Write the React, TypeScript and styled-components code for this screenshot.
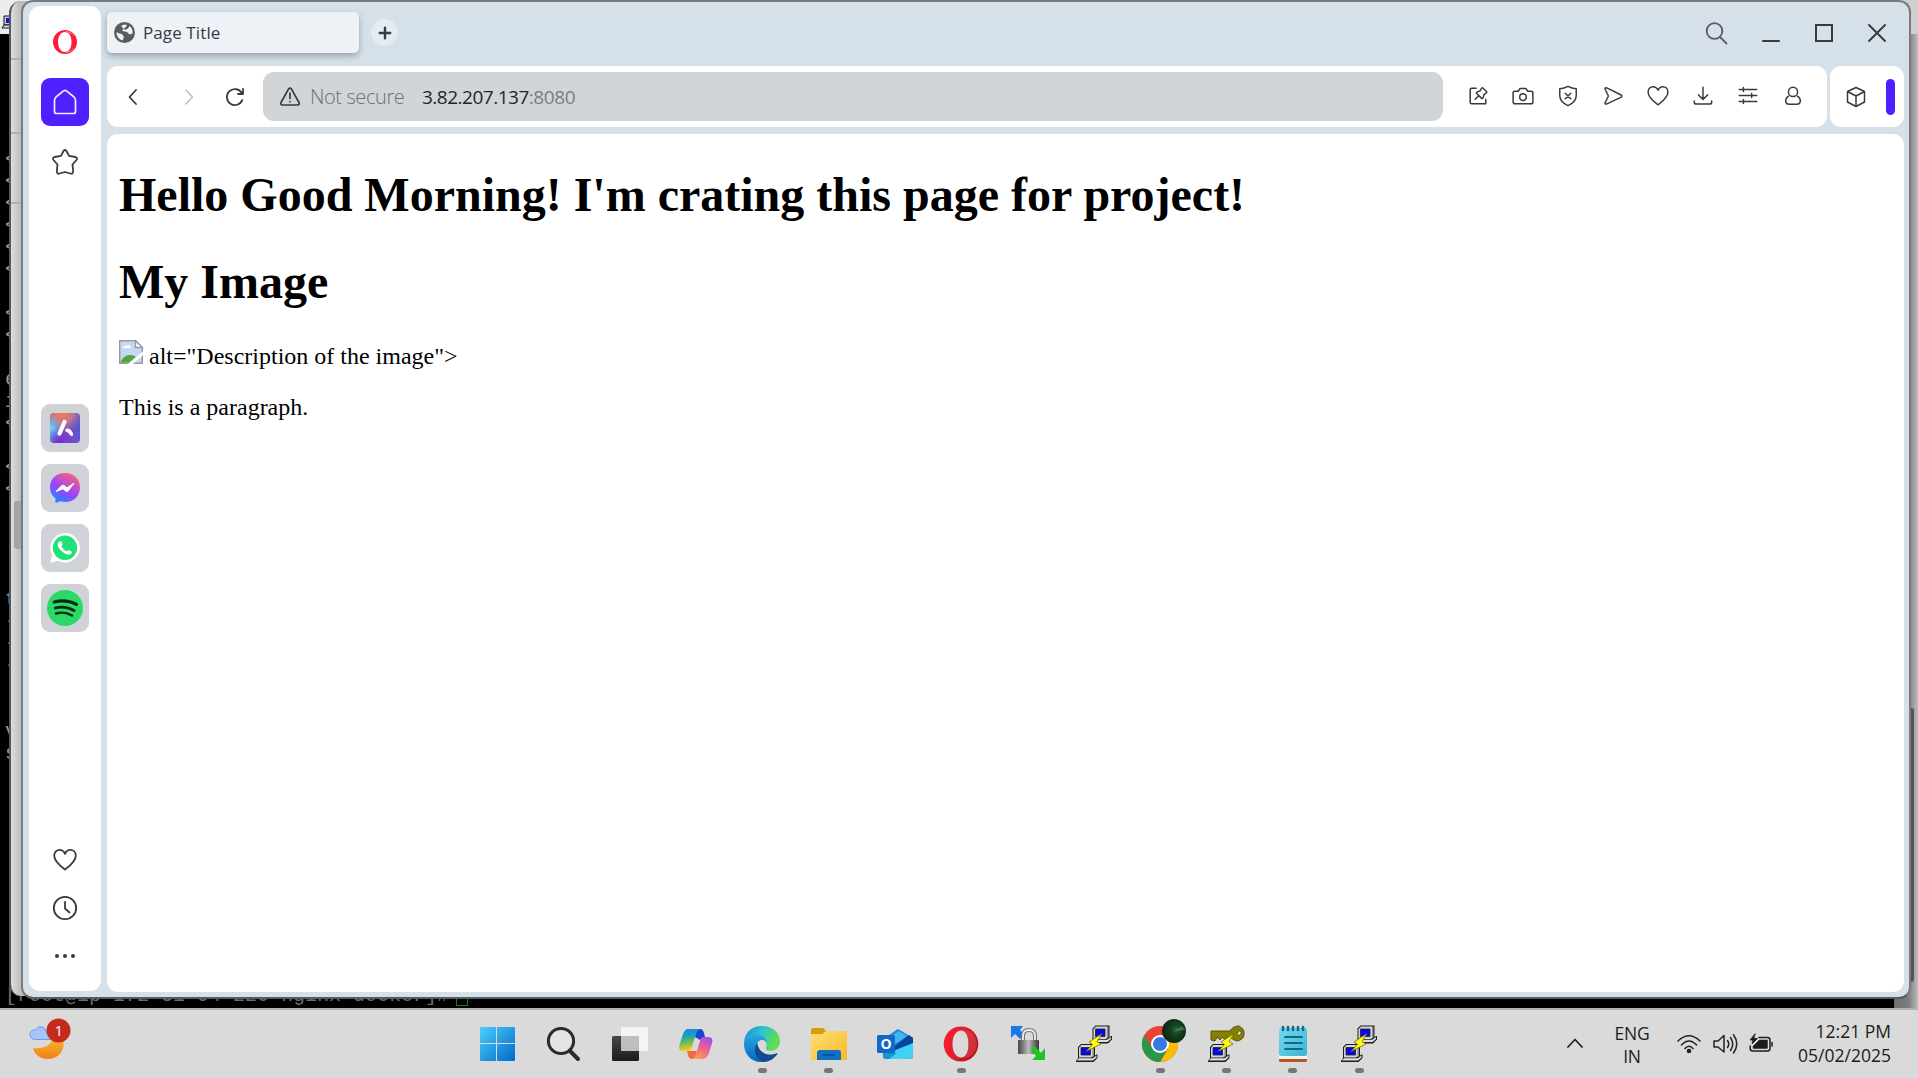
import React from "react";
import styled, { createGlobalStyle } from "styled-components";

const INK = "#343b42";
const FRAME = "#d6e0e9";
const UI = '"Open Sans", "Noto Sans", sans-serif';

const GlobalStyle = createGlobalStyle`
  * { box-sizing: border-box; }
  body { margin: 0; overflow: hidden; background: #000; font-family: ${UI}; }
  svg { display: block; flex: none; overflow: visible; }
`;

const Screen = styled.div`
  display: flex;
  flex-direction: column;
  width: 1918px;
  height: 1078px;
`;

const Desktop = styled.div`
  position: relative;
  flex: 1;
  overflow: hidden;
  background: #000;
`;

/* ---------- terminal behind everything ---------- */
const Terminal = styled.div`
  display: flex;
  flex-direction: column;
  height: 100%;
`;
const TerminalTitle = styled.div`
  flex: none;
  height: 34px;
  padding: 15px 0 0 2px;
  background: #ececec;
`;
const TerminalBody = styled.div`
  display: flex;
  flex: 1;
  min-height: 0;
`;
const TerminalText = styled.div`
  flex: 1;
  padding: 115px 0 0 5px;
  background: #000;
  color: #9a9a9a;
  font: 20px/22px "Liberation Mono", monospace;
  white-space: pre;
`;
const TerminalRow = styled.div<{ $dim?: boolean }>`
  display: flex;
  height: 22px;
  color: ${(p) => (p.$dim ? "#6e6e6e" : "#9a9a9a")};
`;
const Cursor = styled.span`
  width: 12px;
  height: 21px;
  margin-left: -5px;
  border: 1px solid #1d7a1d;
`;
const TerminalScroll = styled.div`
  width: 24px;
  background: linear-gradient(90deg, #6e6e6e, #7c7c7c 60%, #bdbdbd);
`;

/* ---------- second window peeking out on the left ---------- */
const GreyWindow = styled.div`
  position: absolute;
  left: 9px;
  top: 1px;
  width: 60px;
  height: 995px;
  display: flex;
  flex-direction: column;
  border-left: 2px solid #55595e;
  border-radius: 12px;
  background: linear-gradient(90deg, #dedede, #bcbcbc 10px);
`;
const GreyBand = styled.div<{ $h: number }>`
  height: ${(p) => p.$h}px;
  border-bottom: 2px solid #b1b1b1;
`;
const GreyThumb = styled.div`
  width: 20px;
  height: 48px;
  margin: 297px 0 0 3px;
  border-radius: 3px;
  background: #a5a5a5;
`;
const RightThumb = styled.div`
  position: absolute;
  left: 1906px;
  top: 708px;
  width: 8px;
  height: 274px;
  border-radius: 3px;
  background: #525353;
`;
const RightStrip = styled.div`
  position: absolute;
  left: 1894px;
  top: 0;
  width: 24px;
  height: 34px;
  background: #cfcfcf;
`;

/* ---------- browser ---------- */
const Browser = styled.div`
  position: absolute;
  left: 21px;
  top: 0;
  width: 1890px;
  height: 999px;
  display: flex;
  gap: 6px;
  padding: 4px 5px 5px 6px;
  border: 2px solid #777b7f;
  border-bottom-color: #555d64;
  border-radius: 12px;
  background: ${FRAME};
`;
const Sidebar = styled.div`
  display: flex;
  flex-direction: column;
  align-items: center;
  width: 72px;
  height: 985px;
  padding-top: 24px;
  border-radius: 11px;
  background: #fff;
`;
const SideSlot = styled.div<{ $h: number; $top?: number }>`
  display: flex;
  align-items: center;
  justify-content: center;
  height: ${(p) => p.$h}px;
  margin-top: ${(p) => p.$top ?? 0}px;
`;
const SideTile = styled.div<{ $bg: string; $top: number }>`
  display: flex;
  align-items: center;
  justify-content: center;
  width: 48px;
  height: 48px;
  margin-top: ${(p) => p.$top}px;
  border-radius: 9px;
  background: ${(p) => p.$bg};
`;
const Main = styled.div`
  display: flex;
  flex: 1;
  flex-direction: column;
`;
const TabStrip = styled.div`
  display: flex;
  align-items: flex-start;
  height: 60px;
  padding-top: 6px;
`;
const Tab = styled.div`
  display: flex;
  align-items: center;
  gap: 8px;
  width: 252px;
  height: 41px;
  padding-left: 7px;
  border-radius: 5px;
  background: #eef2f7;
  box-shadow: 0 3px 6px rgba(60, 72, 84, 0.4);
  color: #343b42;
  font-size: 17px;
  letter-spacing: 0.1px;
`;
const NewTab = styled.div`
  display: flex;
  align-items: center;
  justify-content: center;
  width: 27px;
  height: 27px;
  margin: 7px 0 0 12px;
  border-radius: 50%;
  background: #e5ebf1;
`;
const WindowControls = styled.div`
  display: flex;
  align-items: center;
  justify-content: flex-end;
  gap: 35px;
  height: 42px;
  margin-left: auto;
  padding-right: 18px;
`;
const ToolRow = styled.div`
  display: flex;
  gap: 3px;
  height: 61px;
`;
const Toolbar = styled.div`
  display: flex;
  align-items: center;
  width: 1720px;
  border-radius: 11px;
  background: #fff;
`;
const NavCell = styled.div<{ $w: number }>`
  display: flex;
  align-items: center;
  justify-content: center;
  width: ${(p) => p.$w}px;
`;
const Address = styled.div`
  display: flex;
  align-items: center;
  width: 1180px;
  height: 49px;
  padding-left: 17px;
  border-radius: 11px;
  background: #d1d5d8;
  font-size: 19px;
`;
const Insecure = styled.span`
  width: 112px;
  margin-left: 10px;
  color: #697077;
  font-size: 20px;
  font-weight: 300;
  letter-spacing: -0.4px;
`;
const Host = styled.span`
  color: #20262c;
  font-size: 19px;
  letter-spacing: -0.5px;
`;
const Port = styled.span`
  color: #75808b;
  font-size: 19px;
  letter-spacing: -0.4px;
`;
const Actions = styled.div`
  display: flex;
  padding: 0 0 2px 12px;
`;
const ExtraBar = styled.div`
  display: flex;
  align-items: center;
  justify-content: space-between;
  width: 74px;
  padding: 0 9px 0 14px;
  border-radius: 11px;
  background: #fff;
`;
const Pill = styled.div`
  width: 9px;
  height: 36px;
  border-radius: 5px;
  background: #4f1fff;
`;
const Page = styled.div`
  height: 858px;
  margin-top: 7px;
  padding: 0 12px;
  border-radius: 11px;
  background: #fff;
  color: #000;
  font: 24px "Liberation Serif", "Times New Roman", serif;
  overflow: hidden;
`;
const Heading = styled.h1`
  margin: 32px 0;
  font-size: 48px;
  line-height: 55px;
  &:first-child { margin-top: 33px; }
  & + & { margin-bottom: 31px; }
`;
const BrokenImage = styled.svg`
  && { display: inline-block; vertical-align: baseline; }
`;
const Paragraph = styled.p`
  margin: 24px 0;
`;

/* ---------- taskbar ---------- */
const Taskbar = styled.div`
  display: flex;
  position: relative;
  height: 70px;
  border-top: 2px solid #b2b2b2;
  background: #dadada;
`;
const Weather = styled.div`
  width: 464px;
  padding: 8px 0 0 30px;
`;
const Apps = styled.div`
  display: flex;
`;
const AppSlot = styled.div<{ $on?: boolean }>`
  display: flex;
  flex-direction: column;
  align-items: center;
  width: 66.3px;
  padding-top: 16px;
  &::after {
    content: "";
    width: 9px;
    height: 5px;
    margin-top: 6px;
    border-radius: 3px;
    background: ${(p) => (p.$on ? "#777" : "transparent")};
  }
`;
const Tray = styled.div`
  display: flex;
  align-items: center;
  margin-left: auto;
  padding: 0 27px 2px 0;
  color: #1c1c1c;
  font-size: 17.5px;
  line-height: 24px;
`;
const Language = styled.div`
  width: 50px;
  margin: 3px 0 0 24px;
  text-align: center;
  line-height: 23px;
  letter-spacing: -0.2px;
`;
const Status = styled.div`
  display: flex;
  gap: 12px;
  margin: 2px 0 0 20px;
`;
const Clock = styled.div`
  width: 118px;
  text-align: right;
  letter-spacing: 0;
`;

type IconProps = { w?: number; h?: number; vb?: string; sw?: number; color?: string; children: React.ReactNode };
const Icon = ({ w = 24, h = w, vb, sw = 1.6, color = INK, children }: IconProps) => (
  <svg width={w} height={h} viewBox={vb ?? `0 0 ${w} ${h}`} fill="none" stroke={color} strokeWidth={sw} strokeLinecap="round" strokeLinejoin="round">
    {children}
  </svg>
);

const heart = "M12 21.5 C8 18.5 1.2 14 1.2 7.6 C1.2 4 3.8 1.8 6.6 1.8 C9.3 1.8 11.2 3.8 12 5.8 C12.8 3.8 14.7 1.8 17.4 1.8 C20.2 1.8 22.8 4 22.8 7.6 C22.8 14 16 18.5 12 21.5Z";

const actionIcons: React.ReactNode[] = [
  <><path d="M10 3.5H5Q3.5 3.5 3.5 5V19Q3.500 20.500 5 20.500H20.500V15.500" /><path d="M16 3.500Q16.800 2.700 17.600 3.500L21.300 7.200Q22 8 21 8.600L18.500 10.500L17.600 14Q17 15.500 15.800 14.300L10.600 9.300Q9.800 8.200 11 7.700L14.300 6.300ZM12.800 11.800L9 15.600" /></>,
  <><path d="M3.5 6.8H6.8L8.8 3.8H15.2L17.2 6.8H20.5Q22.800 6.8 22.800 8.5V18.5Q22.800 20.5 20.5 20.5H3.5Q1.2 20.5 1.2 18.5V8.5Q1.200 6.8 3.5 6.8Z" /><circle cx="12" cy="13.2" r="3.6" /></>,
  <><path d="M12 1.500Q16 3.800 21 4V11.5Q21 18.5 12 22.500Q3 18.5 3 11.5V4Q8 3.800 12 1.500Z" /><path d="M9 9L15 15M15 9L9 15" /></>,
  <path d="M4.200 3Q2.800 3.100 3.500 4.900L7 12L3.500 19.100Q2.800 21 4.800 20.800L21 13.200Q22.400 12 21 10.900L5.200 3.200Z" />,
  <path d={heart} />,
  <><path d="M12 2.500V15.5M7 10.8L12 15.7L17 10.8M2.500 17.5V18.5Q2.500 20.8 4.500 20.8H19.500Q21.500 20.8 21.500 18.5V17.5" /></>,
  <><path d="M2.500 5H21.500M2.500 11.5H21.500M2.500 18H21.500M7 2.800V7.200M16 9.300V13.700M7 15.800V20.200" /></>,
  <><circle cx="12" cy="7.500" r="5" /><path d="M7.200 12.200Q4 14 4 17.200Q4 21 8 21H16Q20 21 20 17.200Q20 14 16.800 12.200" /></>,
];

const Laptop = () => (
  <g>
    <path d="M2 3L5 0H19V13L16 16H2Z" fill="#1c1c1c" />
    <path d="M3 3.500L5.500 1H17V12L14.500 14H3Z" fill="#d4d4d0" />
    <path d="M16.500 2L18 1V12.500L16.500 14Z" fill="#8a8a86" />
    <path d="M5 3.500H14.500V11H5Z" fill="#0707ee" stroke="#222" strokeWidth=".8" />
    <path d="M0 17L2.500 13.500H16.500L20.500 10.500H21.500V14L17.500 18H0Z" fill="#1c1c1c" />
    <path d="M1.200 16L3 14.300H16.800L20.500 11.500V13.500L17 16.500H1.200Z" fill="#dededa" />
  </g>
);
const Bolt = () => <path d="M26 7.500L13 16L16.500 18.500L10 25.500L25 18L21 15.500Z" fill="#fff81a" stroke="#6b6900" strokeWidth=".8" />;
const Putty = () => <svg width="36" height="36" viewBox="0 0 36 36"><g transform="translate(14.500 -.500)"><Laptop /></g><g transform="translate(0 18)"><Laptop /></g><Bolt /></svg>;

const StartIcon = () => (
  <svg width="36" height="36" viewBox="0 0 36 36">
    <defs><linearGradient id="win" x1="0" y1="0" x2="36" y2="36" gradientUnits="userSpaceOnUse"><stop stopColor="#4fd2fb" /><stop offset="1" stopColor="#0068cc" /></linearGradient></defs>
    <path fill="url(#win)" d="M2 1H17V17H1V2Q1 1 2 1ZM18 1H35Q36 1 36 2V17H18ZM1 18H17V35H2Q1 35 1 34ZM18 18H36V34Q36 35 35 35H18Z" />
  </svg>
);
const SearchIcon = () => <Icon w={36} sw={3} color="#2b2b2b"><circle cx="16" cy="15" r="12.6" fill="#e4e4e4" /><path d="M25 25L33 33" strokeWidth="4" /></Icon>;
const TaskView = () => (
  <svg width="36" height="36" viewBox="0 0 36 36">
    <defs><linearGradient id="tv" x2="0" y2="1"><stop stopColor="#484848" /><stop offset="1" stopColor="#1c1c1c" /></linearGradient></defs>
    <rect x="0" y="10" width="27" height="25" rx="1.5" fill="url(#tv)" />
    <rect x="9" y="1" width="27" height="24" rx="1.5" fill="#f4f4f4" />
    <path d="M9 10H27V25H10.5Q9 25 9 23.5Z" fill="#bebebe" />
  </svg>
);
const Copilot = () => (
  <svg width="36" height="36" viewBox="0 0 36 36">
    <defs>
      <linearGradient id="cpA" x2=".2" y2="1"><stop stopColor="#1784e2" /><stop offset=".35" stopColor="#159fc8" /><stop offset=".65" stopColor="#6bbb5a" /><stop offset="1" stopColor="#f6cf15" /></linearGradient>
      <linearGradient id="cpB" x1=".7" x2=".3" y2="1"><stop stopColor="#a44ee8" /><stop offset=".5" stopColor="#f0608c" /><stop offset="1" stopColor="#ff9c52" /></linearGradient>
    </defs>
    <path d="M17 3H22Q25 3 26 7L27 11Q24 11 22 14L17 11Z" fill="#1946cf" />
    <path d="M9 25H19L17 32Q16 33 14 33Q11 33 10 29Z" fill="#f36b3d" />
    <path d="M10 3H22Q19 4 18 8L14 21Q13 25 9 25H5Q0 25 1.500 19L5 8Q7 3 10 3Z" fill="url(#cpA)" />
    <path d="M26 11H30Q36 11 34 17L31 27Q29 33 25 33H14Q17 32 18 28L22 15Q23 11 26 11Z" fill="url(#cpB)" />
  </svg>
);
const Edge = () => (
  <svg width="36" height="36" viewBox="0 0 36 36">
    <defs>
      <linearGradient id="eA" x2="1" y2=".4"><stop stopColor="#1586d3" /><stop offset=".5" stopColor="#2fc2d4" /><stop offset="1" stopColor="#62de4e" /></linearGradient>
      <linearGradient id="eB" x2="0" y2="1"><stop stopColor="#2aa7e0" /><stop offset="1" stopColor="#0565c0" /></linearGradient>
    </defs>
    <path d="M0 16C1 6 8 0 18 0C29 0 36 7 36 15C36 21 32 25 26 25C22 25 21 23 22.500 20C23 15 19 12 14 12C7 12 1 14 0 16Z" fill="url(#eA)" />
    <path d="M0 18C0 11 6 8.500 12 8.500C19 8.500 23 13 23 17C22 14 19 14 17 14C13 15 12 19 13 24C14 30 19 34 24 34.500C22 36 19 36 17 36C7 36 0 28 0 18Z" fill="url(#eB)" />
    <path d="M13.500 17C9 22 10 31 19 36C25 36 30 33 33.500 28C34 27 33 27 32 27.500C24 31 14 26 13.500 17Z" fill="#124a93" />
  </svg>
);
const Folder = () => (
  <svg width="36" height="36" viewBox="0 0 36 36">
    <defs><linearGradient id="fo" x2="1" y2="1"><stop stopColor="#ffdf76" /><stop offset="1" stopColor="#f7b928" /></linearGradient></defs>
    <path d="M0 4Q0 2 2 2H12L15 5V9H0Z" fill="#d99b0b" />
    <path d="M0 8H11L15 5H35Q36 5 36 6V34H0Z" fill="url(#fo)" />
    <path d="M6 34V27Q6 24 9 24H27Q30 24 30 27V34Z" fill="#0f70c4" /><path d="M12 29H24" stroke="#0a4d91" strokeWidth="1.6" strokeLinecap="round" />
  </svg>
);
const OText = styled.text`
  font: 700 14px "Open Sans", sans-serif;
  fill: #fff;
`;
const Outlook = () => (
  <svg width="36" height="36" viewBox="0 0 36 36">
    <path d="M5 14L20 3.500Q21 3 22 3.500L36 12V31Q36 33 34 33H9Q6 33 6 30Z" fill="#168bd8" />
    <path d="M11 12L22 5L30 10L15 20Z" fill="#42b4ee" />
    <path d="M14 23L32 9L36 12V17L20 27Z" fill="#08439b" />
    <path d="M9 33Q6 33 6 29L36 17V30Q36 33 33 33Z" fill="#40d2f4" /><path d="M6 27L20 27L12 33H9Q6 33 6 30Z" fill="#1795d3" />
    <rect x="0" y="9" width="18" height="18" rx="1.500" fill="#1268c5" /><OText x="3.600" y="23">O</OText>
  </svg>
);
const OperaRing = ({ size }: { size: number }) => (
  <svg width={size} height={size} viewBox="0 0 36 36">
    <defs><linearGradient id="op" x2="1" y2=".4"><stop stopColor="#ff1b2d" /><stop offset=".55" stopColor="#e51c2c" /><stop offset="1" stopColor="#b50e20" /></linearGradient></defs>
    <path fillRule="evenodd" fill="url(#op)" d="M18 .500A17.300 17.500 0 1 1 18 35.500A17.300 17.500 0 1 1 18 .500ZM18 4.500C13 4.500 9.500 10 9.500 18S13 31.500 18 31.500S25.500 26 25.500 18S23 4.500 18 4.500Z" />
    <path d="M18 4.500C28 2 34 11 34 18S28 34 18 31.500C23 31.500 25.500 26 25.500 18S23 4.500 18 4.500Z" fill="#e04a52" opacity=".55" />
  </svg>
);
const WinScp = () => (
  <svg width="36" height="36" viewBox="0 0 36 36">
    <defs><linearGradient id="lk"><stop stopColor="#444" /><stop offset=".5" stopColor="#bbb" /><stop offset="1" stopColor="#333" /></linearGradient></defs>
    <path d="M1 0H13L10 4L15 9L10 13L5 8L1 12Z" fill="#1977e8" />
    <path d="M13 15V10Q13 4 19 4T25 10V15" fill="none" stroke="#777" strokeWidth="4" /><path d="M13 15V10Q13 4 19 4T25 10V15" fill="none" stroke="#eee" strokeWidth="1.800" />
    <rect x="8" y="14" width="21" height="14" rx="1" fill="url(#lk)" />
    <path d="M35 34H22L26 30L21 24L25 20L31 27L35 22Z" fill="#20c321" />
  </svg>
);
const Chrome = () => (
  <svg width="36" height="36" viewBox="0 0 36 36">
    <circle cx="18" cy="18" r="18" fill="#e94235" />
    <path d="M18 36A18 18 0 0 0 33.600 9H18L25.800 22.500Z" fill="#fbbc09" />
    <path d="M2.400 9A18 18 0 0 0 18 36L25.800 22.500H10.200Z" fill="#279847" />
    <circle cx="18" cy="18" r="9" fill="#fff" /><circle cx="18" cy="18" r="7" fill="#3479e8" />
    <defs><radialGradient id="av" cx=".6" cy=".45"><stop stopColor="#2d6b3c" /><stop offset=".4" stopColor="#154521" /><stop offset="1" stopColor="#0c2a15" /></radialGradient></defs>
    <circle cx="32" cy="5" r="12" fill="url(#av)" /><path d="M32 5L40 0L43 4Z" fill="#6f9c7a" opacity=".5" />
  </svg>
);
const PuttyGen = () => (
  <svg width="36" height="36" viewBox="0 0 36 36">
    <g transform="translate(0 18)"><Laptop /></g>
    <path fillRule="evenodd" d="M3 5H22Q25 0 31 0Q37 3 36 9Q35 14 29 15Q25 14 22 11H19L17 14L14 11L12 14L9 11L7 15L3 14ZM30 5Q28 8 31 10Q34 8 33 5Z" fill="#858000" stroke="#4d4b0b" strokeWidth=".9" />
    <Bolt />
  </svg>
);
const Notepad = () => (
  <svg width="36" height="36" viewBox="0 0 36 36">
    <defs><linearGradient id="np" x2="1" y2="1"><stop stopColor="#77d9ee" /><stop offset="1" stopColor="#3bb4d6" /></linearGradient></defs>
    <rect x="4" y="31" width="28" height="5" rx="1.500" fill="#b5581c" /><rect x="4" y="29" width="28" height="4" fill="#f4f4f4" />
    <rect x="4" y="2" width="28" height="28" rx="2" fill="url(#np)" />
    <path d="M8 1V4M13 1V4M18 1V4M23 1V4M28 1V4" stroke="#17698b" strokeWidth="2.600" strokeLinecap="round" />
    <path d="M10 11H27M10 17H27M10 23H27" stroke="#126887" strokeWidth="1.800" strokeLinecap="round" />
  </svg>
);

const BadgeText = styled.text`
  font: 15px "Open Sans", sans-serif;
  fill: #fff;
`;

const apps: { icon: React.ReactNode; on?: boolean }[] = [
  { icon: <StartIcon /> }, { icon: <SearchIcon /> }, { icon: <TaskView /> }, { icon: <Copilot /> },
  { icon: <Edge />, on: true }, { icon: <Folder />, on: true }, { icon: <Outlook /> },
  { icon: <OperaRing size={36} />, on: true }, { icon: <WinScp /> }, { icon: <Putty /> },
  { icon: <Chrome />, on: true }, { icon: <PuttyGen />, on: true }, { icon: <Notepad />, on: true }, { icon: <Putty />, on: true },
];

const rows = [..."<<<<<< << ei< <<    t---  vs"].concat(Array(10).fill(" "));

const Aria = () => (
  <svg width="30" height="30" viewBox="0 0 30 30">
    <defs>
      <linearGradient id="arA" x1="0" y1="1" x2="1" y2=".3"><stop stopColor="#45bff0" /><stop offset=".45" stopColor="#7a4bcf" /><stop offset="1" stopColor="#5457c8" /></linearGradient>
      <radialGradient id="arB" cx=".4" cy="-.05" r=".75"><stop stopColor="#ff7b45" /><stop offset=".5" stopColor="#e08078" stopOpacity=".8" /><stop offset="1" stopColor="#9b6ab5" stopOpacity="0" /></radialGradient>
      <radialGradient id="arC" cx="0" cy=".5" r=".45"><stop stopColor="#62d8f4" /><stop offset="1" stopColor="#62d8f4" stopOpacity="0" /></radialGradient>
      <radialGradient id="arD" cx=".3" cy="1" r=".5"><stop stopColor="#7921cc" /><stop offset="1" stopColor="#7921cc" stopOpacity="0" /></radialGradient>
    </defs>
    {["arA", "arB", "arC", "arD"].map((id) => <rect key={id} width="30" height="30" rx="4" fill={`url(#${id})`} />)}
    <path d="M14.500 9L9.500 20.500" stroke="#fff" strokeWidth="4.200" strokeLinecap="round" />
    <path d="M15.500 16Q20 14 22.800 20Q23.500 24.500 20.500 22.500Q18.500 19 15.500 18.500Z" fill="#fff" />
  </svg>
);
const Messenger = () => (
  <svg width="30" height="30" viewBox="0 0 30 30">
    <defs><linearGradient id="ms" x1=".2" y1="1" x2=".75" y2="0"><stop stopColor="#168dff" /><stop offset=".45" stopColor="#9a43ff" /><stop offset="1" stopColor="#ff6375" /></linearGradient></defs>
    <path d="M15 0C24 0 30 6 30 14.500S24 29 15 29Q12.500 29 10.500 28.200L5.500 30V25.500C2 23 0 19 0 14.500C0 6 6 0 15 0Z" fill="url(#ms)" />
    <path d="M6 18.500L11.800 12.500Q13 11.500 14.300 12.600L17 14.800L24 10.200L18.300 17.800Q17 19 15.700 18L13 15.800Z" fill="#fff" stroke="#fff" />
  </svg>
);
const WhatsApp = () => (
  <svg width="30" height="30" viewBox="0 0 30 30">
    <path d="M15 0A14.800 14.800 0 1 1 8 27.800L0 30L2.200 22A14.800 14.800 0 0 1 15 0Z" fill="#fff" />
    <circle cx="15" cy="14.800" r="12.200" fill="#20e279" />
    <path d="M9.200 8.500Q10.700 7.200 11.700 9L12.700 11.500L11.500 13.600Q13.200 17 16.600 18.500L18.600 17L21.600 18.500Q22.800 20 20 21.500Q16.500 22.500 12 18.500T7.600 11.500Q7.800 9.500 9.200 8.500Z" fill="#fff" />
  </svg>
);
const Spotify = () => (
  <svg width="36" height="36" viewBox="0 0 36 36" fill="none" stroke="#062b12" strokeLinecap="round">
    <circle cx="18" cy="18" r="18" fill="#2bd968" stroke="none" />
    <path d="M7.300 12Q19 8.800 29.500 14.300" strokeWidth="3.200" /><path d="M8.300 18Q18 15.300 27 20.500" strokeWidth="2.800" /><path d="M9 23.500Q18 21 25 25.500" strokeWidth="2.400" />
  </svg>
);

export default function App() {
  return (
    <Screen>
      <GlobalStyle />
      <Desktop>
        <Terminal>
          <TerminalTitle><svg width="14" height="14" viewBox="0 0 14 14"><path d="M2 1H13V10H2Z" fill="#ccc" stroke="#111" /><path d="M4 3H11V8H4Z" fill="#0b0be0" /><path d="M0 13L2 10H14V13Z" fill="#ddd" stroke="#111" /></svg></TerminalTitle>
          <TerminalBody>
            <TerminalText>
              {rows.map((r, i) => <TerminalRow key={i}>{r}</TerminalRow>)}
              <TerminalRow $dim>{"[root@ip-172-31-94-220 nginx-docker]# "}<Cursor /></TerminalRow>
            </TerminalText>
            <TerminalScroll />
          </TerminalBody>
        </Terminal>
        <GreyWindow><GreyBand $h={59} /><GreyBand $h={74} /><GreyBand $h={70} /><GreyThumb /></GreyWindow>
        <RightStrip />
        <RightThumb />
        <Browser>
          <Sidebar>
            <SideSlot $h={24}><svg width="24" height="24" viewBox="0 0 24 24"><path fill="#fa1e35" fillRule="evenodd" d="M12 0A12 12 0 1 1 12 24A12 12 0 1 1 12 0ZM12 2C7.500 2 5 6.500 5 12S7.500 22 12 22S18.500 17.500 18.500 12S16.500 2 12 2Z" /><path d="M12 2C15.500 1 19.500 3.500 20.500 5.500M12 22C15.500 23 19.500 20.500 20.500 18.500" stroke="#ff8c98" strokeWidth="1" fill="none" /></svg></SideSlot>
            <SideTile $bg="#4f1fff" $top={24}><Icon sw={1.7} color="#f3eaff"><path d="M1.500 10.500Q1.500 8.500 3 7L10.500.900Q12 0 13.500.900L21 7Q22.500 8.500 22.500 10.500V21.500Q22.500 23.500 20.500 23.500H3.500Q1.500 23.500 1.500 21.500Z" /></Icon></SideTile>
            <SideSlot $h={24} $top={24}><Icon w={26} vb="0 0 26 26" sw={1.8}><path d="M11.500 2Q13 0 14.500 2L17 6.800L23.500 8Q26 8.800 24.500 11L20.500 15.500L21.200 22.500Q21 25.500 18.500 24.500L13 23L7.500 24.500Q5 25.500 4.800 22.500L5.500 15.500L1.500 11Q0 8.800 2.500 8L9 6.800Z" /></Icon></SideSlot>
            <SideTile $bg="#cfd3d7" $top={230}><Aria /></SideTile>
            <SideTile $bg="#cfd3d7" $top={12}><Messenger /></SideTile>
            <SideTile $bg="#cfd3d7" $top={12}><WhatsApp /></SideTile>
            <SideTile $bg="#cfd3d7" $top={12}><Spotify /></SideTile>
            <SideSlot $h={24} $top={216}><Icon sw={1.8}><path d={heart} /></Icon></SideSlot>
            <SideSlot $h={24} $top={24}><Icon sw={1.8}><circle cx="12" cy="12" r="11.200" /><path d="M12 6V12.500L16.500 16.500" /></Icon></SideSlot>
            <SideSlot $h={24} $top={24}><Icon color="none"><circle cx="4" cy="12" r="2" fill={INK} /><circle cx="12" cy="12" r="2" fill={INK} /><circle cx="20" cy="12" r="2" fill={INK} /></Icon></SideSlot>
          </Sidebar>
          <Main>
            <TabStrip>
              <Tab>
                <svg width="21" height="21" viewBox="0 0 21 21"><circle cx="10.500" cy="10.500" r="10.500" fill="#565d61" /><path d="M2.500 10Q5 12 8 12L10 15L8.500 18.500Q2.500 16.500 2.500 10ZM7 4Q10 1.500 13 3L11.500 5.500L9 6.500L8.500 9L13 10L15.500 12.500L18.500 11.500Q19 6 15.500 4L14 6.500L11 8" fill="#eef2f7" /></svg>
                Page Title
              </Tab>
              <NewTab><Icon w={12} sw={2.4}><path d="M6 .800V11.200M.800 6H11.200" /></Icon></NewTab>
              <WindowControls>
                <Icon w={22} sw={1.8} color="#555d66"><circle cx="9.500" cy="9" r="7.800" /><path d="M15 15L21.500 21.500" /></Icon>
                <Icon w={18} sw={2}><path d="M1 17H17" /></Icon>
                <svg width="18" height="18" viewBox="0 0 18 18"><path d="M1 1H17V17H1Z" fill="none" stroke={INK} strokeWidth="2" /></svg>
                <Icon w={18} sw={1.9}><path d="M1 1L17 17M17 1L1 17" /></Icon>
              </WindowControls>
            </TabStrip>
            <ToolRow>
              <Toolbar>
                <NavCell $w={52}><Icon w={8} h={16} sw={1.8}><path d="M7 1L.500 8L7 15" /></Icon></NavCell>
                <NavCell $w={60}><Icon w={8} h={16} sw={1.5} color="#b9bec3"><path d="M1 1L7.500 8L1 15" /></Icon></NavCell>
                <NavCell $w={32}><Icon w={18} sw={1.8}><path d="M16.300 12.200A8 8 0 1 1 15.500 4.500M17 1V6H12" /></Icon></NavCell>
                <NavCell $w={12} />
                <Address>
                  <Icon w={20} h={20} sw={1.7}><path d="M8.600 1.800Q10 .300 11.400 1.800L19 15.500Q19.800 17.800 17.500 18H2.500Q.200 17.800 1 15.500ZM10 6V11.500M10 14.500V14.700" /></Icon>
                  <Insecure>Not secure</Insecure><Host>3.82.207.137</Host><Port>:8080</Port>
                </Address>
                <Actions>{actionIcons.map((g, i) => <NavCell $w={45} key={i}><Icon w={22} vb="0 0 24 24">{g}</Icon></NavCell>)}</Actions>
              </Toolbar>
              <ExtraBar>
                <Icon w={24} sw={1.5}><path d="M12 2.500L20.500 6.500V17L12 21.500L3.500 17V6.500ZM3.500 6.500L12 11L20.500 6.500M12 11V21.500" /></Icon>
                <Pill />
              </ExtraBar>
            </ToolRow>
            <Page>
              <Heading>Hello Good Morning! I'm crating this page for project!</Heading>
              <Heading>My Image</Heading>
              <BrokenImage width="24" height="24" viewBox="0 0 24 24">
                <path d="M.700.700H16.500L23.300 7.500V23.300H.700Z" fill="#c5d7f2" stroke="#9a9a9a" strokeWidth="1.400" />
                <path d="M3.500 8Q5 5 8 5.500Q11 4 12 8Z" fill="#fff" /><path d="M1.400 22.600Q4 16 10 15Q14 14.500 17 17L10 22.600Z" fill="#4fa93a" />
                <path d="M24.500 11V14.500L13.500 24.500H8.500Z" fill="#fff" /><path d="M16.500.700V7.500H23.300Z" fill="#fff" stroke="#9a9a9a" strokeWidth="1.400" />
              </BrokenImage>{" "}alt="Description of the image"&gt;
              <Paragraph>This is a paragraph.</Paragraph>
            </Page>
          </Main>
        </Browser>
      </Desktop>
      <Taskbar>
        <Weather>
          <svg width="42" height="42" viewBox="0 0 42 42">
            <defs><linearGradient id="mo" x2="0" y2="1"><stop stopColor="#fbb62a" /><stop offset="1" stopColor="#ee7f1c" /></linearGradient></defs>
            <path d="M33.500 23C35 33 28 41 18 41C10 41 4 36 3 30C13 31 21 28 23 20Z" fill="url(#mo)" />
            <path d="M5 21.500Q0 21 0 16.500T5.500 12Q8 7.500 12.500 9Q16 10.500 16 14L22 21.500Z" fill="#a5c5fb" stroke="#6c99ee" />
            <circle cx="28.500" cy="12.500" r="12" fill="#c42b1c" /><BadgeText x="24.500" y="18">1</BadgeText>
          </svg>
        </Weather>
        <Apps>{apps.map((a, i) => <AppSlot key={i} $on={a.on}>{a.icon}</AppSlot>)}</Apps>
        <Tray>
          <Icon w={16} h={10} color="#222" sw={1.8}><path d="M1 9L8 1.500L15 9" /></Icon>
          <Language>ENG<br />IN</Language>
          <Status>
            <Icon w={24} h={20} color="#222" sw={1.6}><path d="M1 7Q12-3.500 23 7M4.500 11Q12 3 19.500 11M8 14.500Q12 10 16 14.500" /><circle cx="12" cy="17" r="1.500" fill="#222" /></Icon>
            <Icon w={24} h={20} color="#222" sw={1.5}><path d="M1 7H5L11 1.500V18L5 13H1ZM14.500 6.500Q17 10 14.500 13.500M17.500 3.500Q22 10 17.500 16.500M20.500.800Q27 10 20.500 19" /></Icon>
            <Icon w={24} h={20} color="#1c1c1c" sw={1.5}><path d="M10 3.500H18.500Q21 3.500 21 6V14.500Q21 17 18.500 17H4Q1.200 17 1.200 14.500V12M23 8.500V12" /><path d="M10.500 6.500H18V14H4.500V12.500Z" fill="#1c1c1c" /><path d="M6 0L1 6H4L3 10L8.500 4.500H5Z" fill="#1c1c1c" strokeWidth=".8" /></Icon>
          </Status>
          <Clock>12:21 PM<br />05/02/2025</Clock>
        </Tray>
      </Taskbar>
    </Screen>
  );
}
